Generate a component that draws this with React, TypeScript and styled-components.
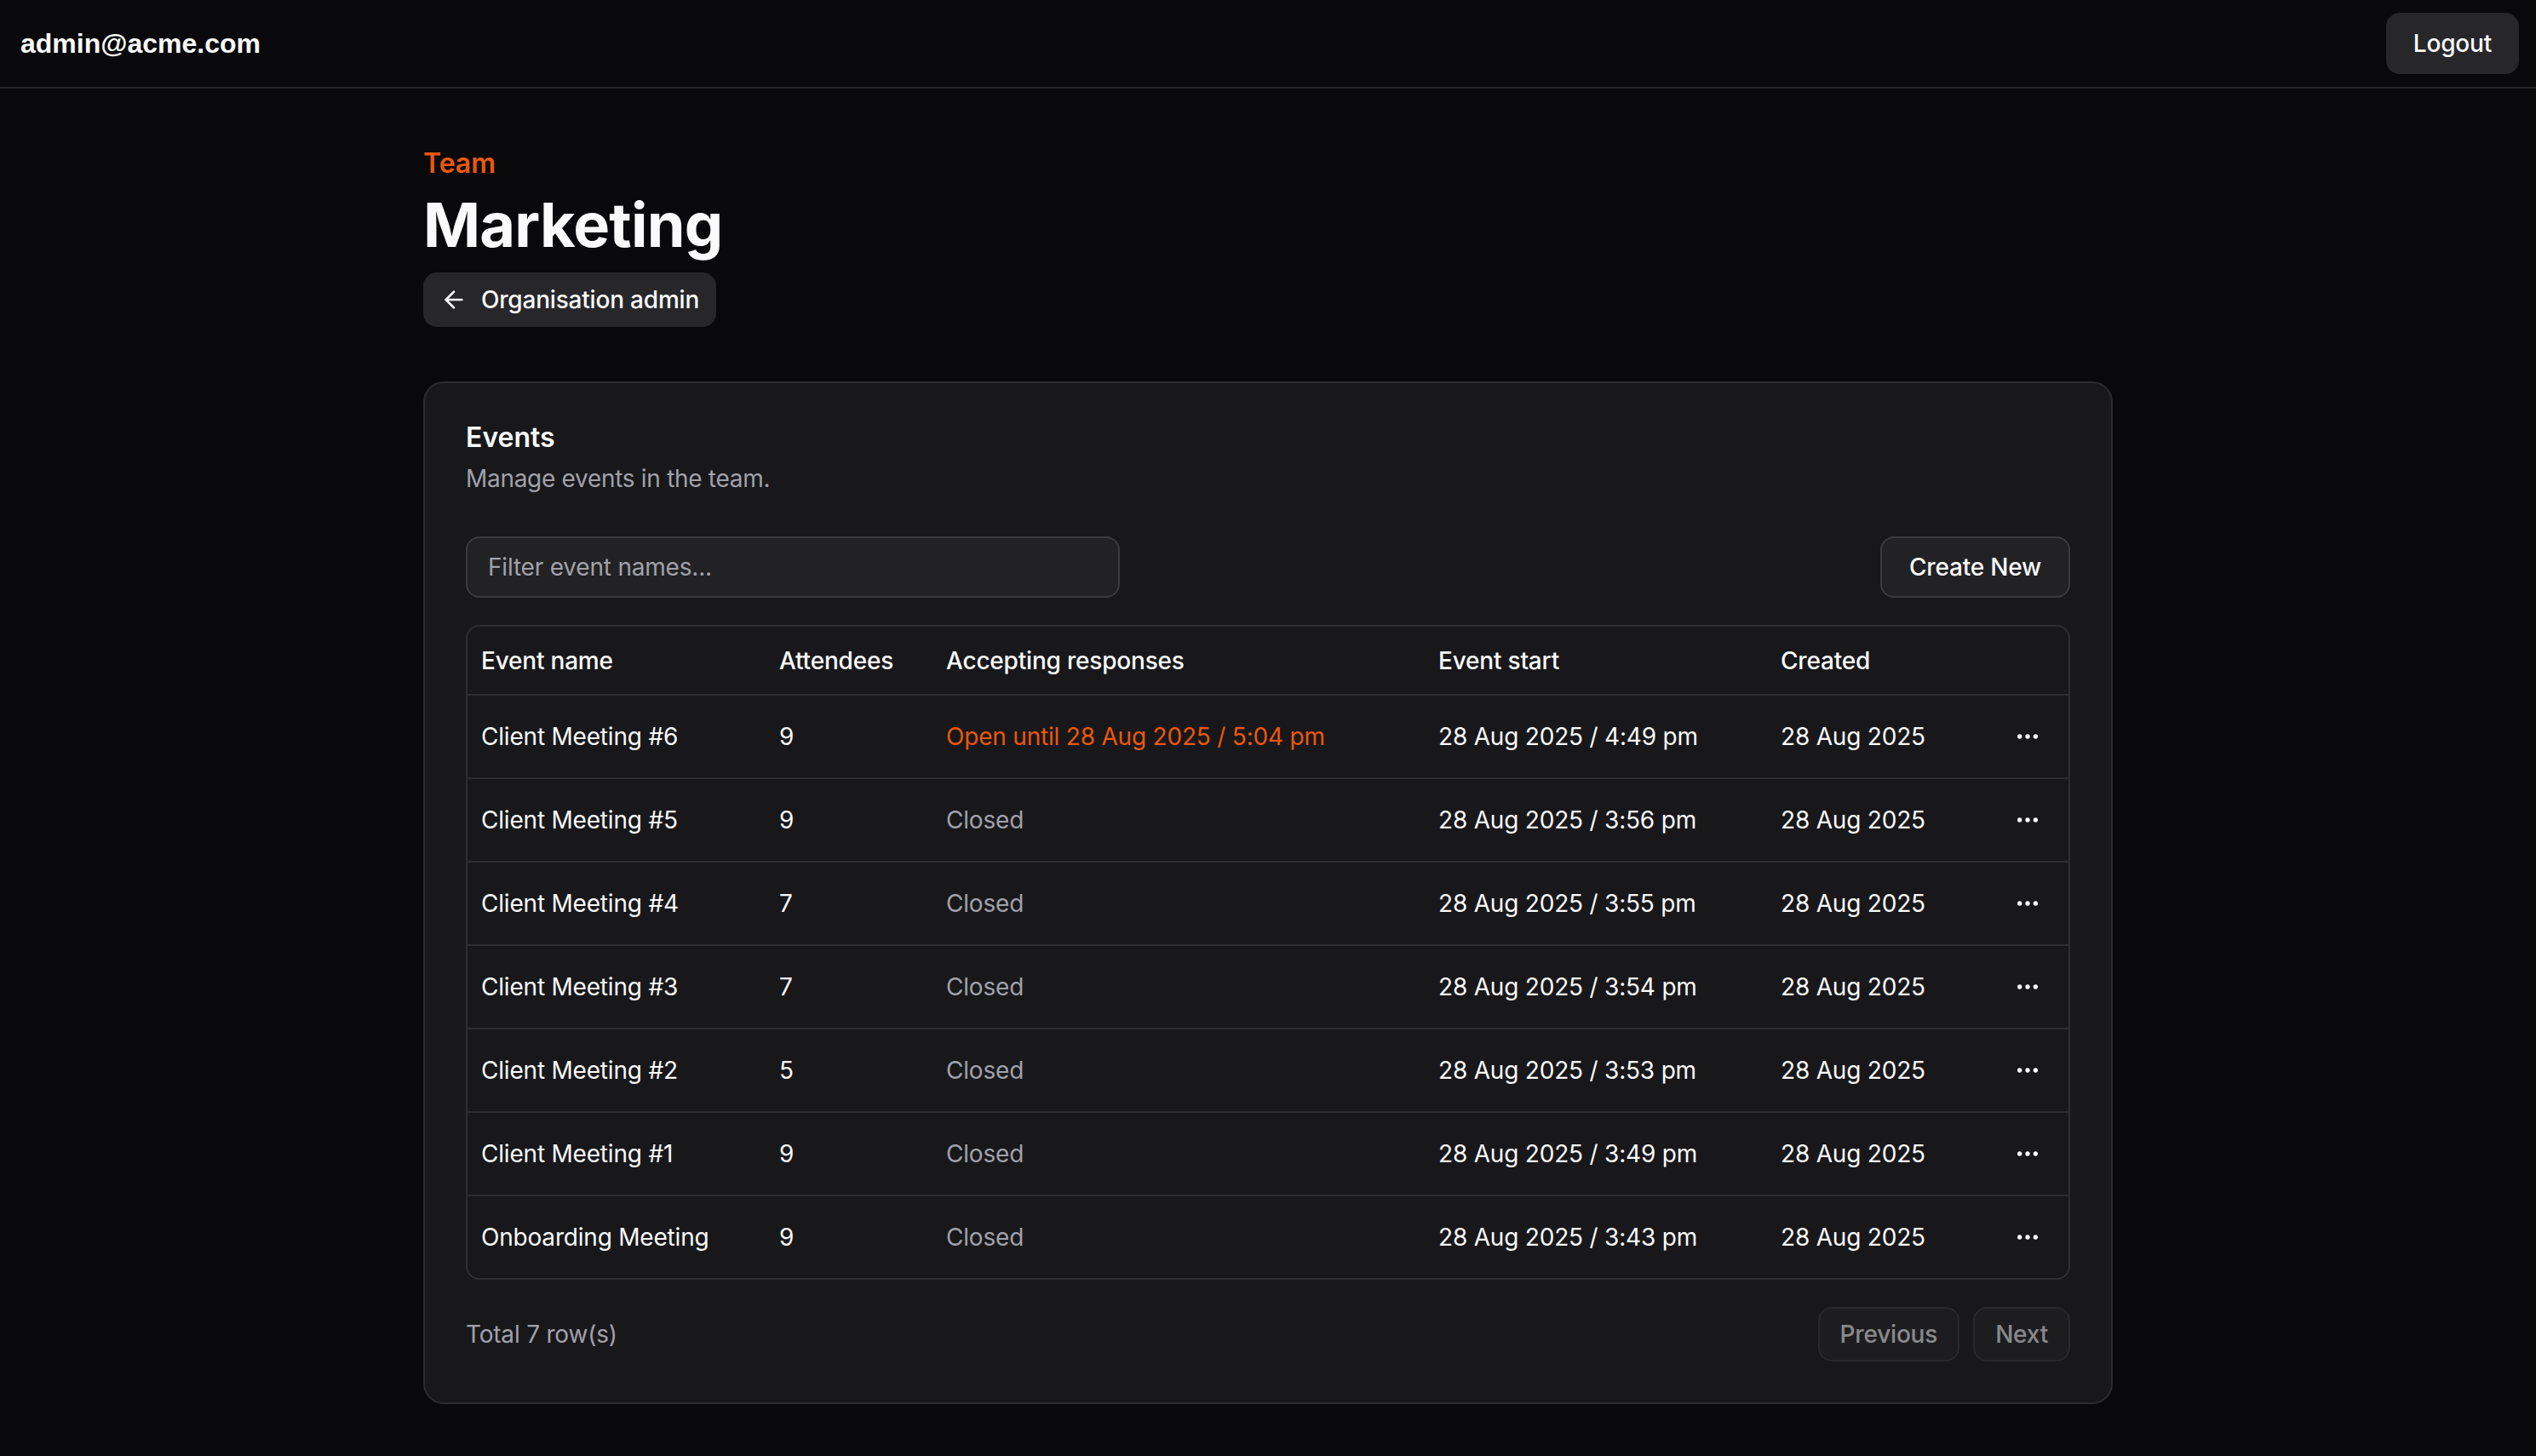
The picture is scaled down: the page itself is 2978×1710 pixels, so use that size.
import React from "react";
import styled, { createGlobalStyle } from "styled-components";
import { ArrowLeft, Ellipsis } from "lucide-react";

const GlobalStyle = createGlobalStyle`
  html {
    zoom: 2;
    background: #09090b;
  }
  body {
    margin: 0;
    background: #09090b;
    color: #fafafa;
    font-family: Inter, "Noto Sans", sans-serif;
    -webkit-font-smoothing: antialiased;
  }
  * { box-sizing: border-box; }
`;

const TopBar = styled.header`
  display: flex;
  align-items: center;
  justify-content: space-between;
  height: 52px;
  padding: 0 10px 0 12px;
  border-bottom: 1px solid #27272a;
`;

const UserEmail = styled.span`
  font-family: "Liberation Sans", Arial, sans-serif;
  font-weight: 700;
  font-size: 16px;
  color: #fafafa;
`;

const SolidButton = styled.button<{ $size?: "sm" | "md" }>`
  display: inline-flex;
  align-items: center;
  gap: 8px;
  height: ${(p) => (p.$size === "sm" ? "32px" : "36px")};
  padding: ${(p) => (p.$size === "sm" ? "0 10px" : "0 16px")};
  border: none;
  border-radius: 8px;
  background: #27272a;
  color: #fafafa;
  font-family: Inter, sans-serif;
  font-size: 14px;
  font-weight: 500;
  letter-spacing: -0.1px;
  cursor: pointer;
`;

const Main = styled.main`
  max-width: 1024px;
  margin: 0 auto;
  padding: 32px 16px;
`;

const Eyebrow = styled.div`
  color: #ea580c;
  font-size: 16px;
  line-height: 24px;
  font-weight: 600;
  margin-bottom: 4px;
`;

const PageTitle = styled.h1`
  margin: 0 0 8px;
  font-size: 36px;
  line-height: 40px;
  font-weight: 700;
  letter-spacing: -0.4px;
`;

const Card = styled.section`
  margin-top: 32px;
  background: #18181b;
  border: 1px solid #2c2c30;
  border-radius: 12px;
`;

const CardHeader = styled.div`
  display: flex;
  flex-direction: column;
  gap: 6px;
  padding: 24px;
`;

const CardTitle = styled.h2`
  margin: 0;
  font-size: 16px;
  line-height: 1;
  font-weight: 600;
`;

const CardDescription = styled.p`
  margin: 0;
  font-size: 14px;
  line-height: 20px;
  color: #a1a1aa;
  letter-spacing: -0.15px;
`;

const CardContent = styled.div`
  padding: 0 24px 24px;
`;

const Toolbar = styled.div`
  display: flex;
  align-items: center;
  justify-content: space-between;
  margin-bottom: 16px;
`;

const FilterInput = styled.input`
  width: 384px;
  height: 36px;
  padding: 0 12px;
  background: #222225;
  border: 1px solid #3a3a3f;
  border-radius: 8px;
  color: #fafafa;
  font-family: Inter, sans-serif;
  font-size: 14px;
  letter-spacing: -0.1px;
  outline: none;
  &::placeholder {
    color: #a1a1aa;
  }
`;

const OutlineButton = styled.button<{ $size?: "sm" | "md" }>`
  height: ${(p) => (p.$size === "sm" ? "32px" : "36px")};
  padding: ${(p) => (p.$size === "sm" ? "0 12px" : "0 16px")};
  background: #222225;
  border: 1px solid #3a3a3f;
  border-radius: 8px;
  color: #fafafa;
  font-family: Inter, sans-serif;
  font-size: 14px;
  font-weight: 500;
  letter-spacing: -0.1px;
  cursor: pointer;
  &:disabled {
    opacity: 0.5;
    cursor: default;
  }
`;

const TableFrame = styled.div`
  border: 1px solid #2e2e32;
  border-radius: 8px;
  overflow: hidden;
`;

const Table = styled.table`
  width: 100%;
  border-collapse: collapse;
  table-layout: fixed;
  font-size: 14px;
`;

const Col = styled.col<{ $width: number }>`
  width: ${(p) => p.$width}px;
`;

const HeadRow = styled.tr`
  border-bottom: 1px solid #2e2e32;
`;

const Th = styled.th`
  height: 40px;
  padding: 0 8px;
  text-align: left;
  font-weight: 500;
  color: #fafafa;
  white-space: nowrap;
  letter-spacing: -0.1px;
`;

const Row = styled.tr`
  border-bottom: 1px solid #2e2e32;
  &:last-child {
    border-bottom: none;
  }
`;

const Td = styled.td<{ $tone?: "default" | "muted" | "accent"; $align?: "left" | "center" }>`
  padding: 8px;
  vertical-align: middle;
  white-space: nowrap;
  letter-spacing: -0.1px;
  text-align: ${(p) => p.$align ?? "left"};
  color: ${(p) =>
    p.$tone === "accent" ? "#ea580c" : p.$tone === "muted" ? "#a1a1aa" : "#fafafa"};
`;

const IconButton = styled.button`
  display: inline-flex;
  align-items: center;
  justify-content: center;
  width: 32px;
  height: 32px;
  padding: 0;
  border: none;
  border-radius: 6px;
  background: transparent;
  color: #fafafa;
  cursor: pointer;
`;

const Footer = styled.div`
  display: flex;
  align-items: center;
  justify-content: space-between;
  padding-top: 16px;
`;

const RowCount = styled.span`
  font-size: 14px;
  color: #a1a1aa;
  letter-spacing: -0.1px;
`;

const Pager = styled.div`
  display: flex;
  gap: 8px;
`;

type EventRow = {
  name: string;
  attendees: number;
  status: string;
  open: boolean;
  start: string;
  created: string;
};

const events: EventRow[] = [
  { name: "Client Meeting #6", attendees: 9, status: "Open until 28 Aug 2025 / 5:04 pm", open: true, start: "28 Aug 2025 / 4:49 pm", created: "28 Aug 2025" },
  { name: "Client Meeting #5", attendees: 9, status: "Closed", open: false, start: "28 Aug 2025 / 3:56 pm", created: "28 Aug 2025" },
  { name: "Client Meeting #4", attendees: 7, status: "Closed", open: false, start: "28 Aug 2025 / 3:55 pm", created: "28 Aug 2025" },
  { name: "Client Meeting #3", attendees: 7, status: "Closed", open: false, start: "28 Aug 2025 / 3:54 pm", created: "28 Aug 2025" },
  { name: "Client Meeting #2", attendees: 5, status: "Closed", open: false, start: "28 Aug 2025 / 3:53 pm", created: "28 Aug 2025" },
  { name: "Client Meeting #1", attendees: 9, status: "Closed", open: false, start: "28 Aug 2025 / 3:49 pm", created: "28 Aug 2025" },
  { name: "Onboarding Meeting", attendees: 9, status: "Closed", open: false, start: "28 Aug 2025 / 3:43 pm", created: "28 Aug 2025" },
];

export default function App() {
  return (
    <>
      <GlobalStyle />
      <TopBar>
        <UserEmail>admin@acme.com</UserEmail>
        <SolidButton>Logout</SolidButton>
      </TopBar>
      <Main>
        <Eyebrow>Team</Eyebrow>
        <PageTitle>Marketing</PageTitle>
        <SolidButton $size="sm">
          <ArrowLeft size={16} strokeWidth={2} />
          Organisation admin
        </SolidButton>

        <Card>
          <CardHeader>
            <CardTitle>Events</CardTitle>
            <CardDescription>Manage events in the team.</CardDescription>
          </CardHeader>
          <CardContent>
            <Toolbar>
              <FilterInput placeholder="Filter event names..." />
              <OutlineButton>Create New</OutlineButton>
            </Toolbar>
            <TableFrame>
              <Table>
                <colgroup>
                  <Col $width={175} />
                  <Col $width={98} />
                  <Col $width={289} />
                  <Col $width={201} />
                  <Col $width={129} />
                  <Col $width={48} />
                </colgroup>
                <thead>
                  <HeadRow>
                    <Th>Event name</Th>
                    <Th>Attendees</Th>
                    <Th>Accepting responses</Th>
                    <Th>Event start</Th>
                    <Th>Created</Th>
                    <Th />
                  </HeadRow>
                </thead>
                <tbody>
                  {events.map((e) => (
                    <Row key={e.name}>
                      <Td>{e.name}</Td>
                      <Td>{e.attendees}</Td>
                      <Td $tone={e.open ? "accent" : "muted"}>{e.status}</Td>
                      <Td>{e.start}</Td>
                      <Td>{e.created}</Td>
                      <Td $align="center">
                        <IconButton aria-label="Open menu">
                          <Ellipsis size={16} strokeWidth={2} />
                        </IconButton>
                      </Td>
                    </Row>
                  ))}
                </tbody>
              </Table>
            </TableFrame>
            <Footer>
              <RowCount>Total 7 row(s)</RowCount>
              <Pager>
                <OutlineButton $size="sm" disabled>
                  Previous
                </OutlineButton>
                <OutlineButton $size="sm" disabled>
                  Next
                </OutlineButton>
              </Pager>
            </Footer>
          </CardContent>
        </Card>
      </Main>
    </>
  );
}
